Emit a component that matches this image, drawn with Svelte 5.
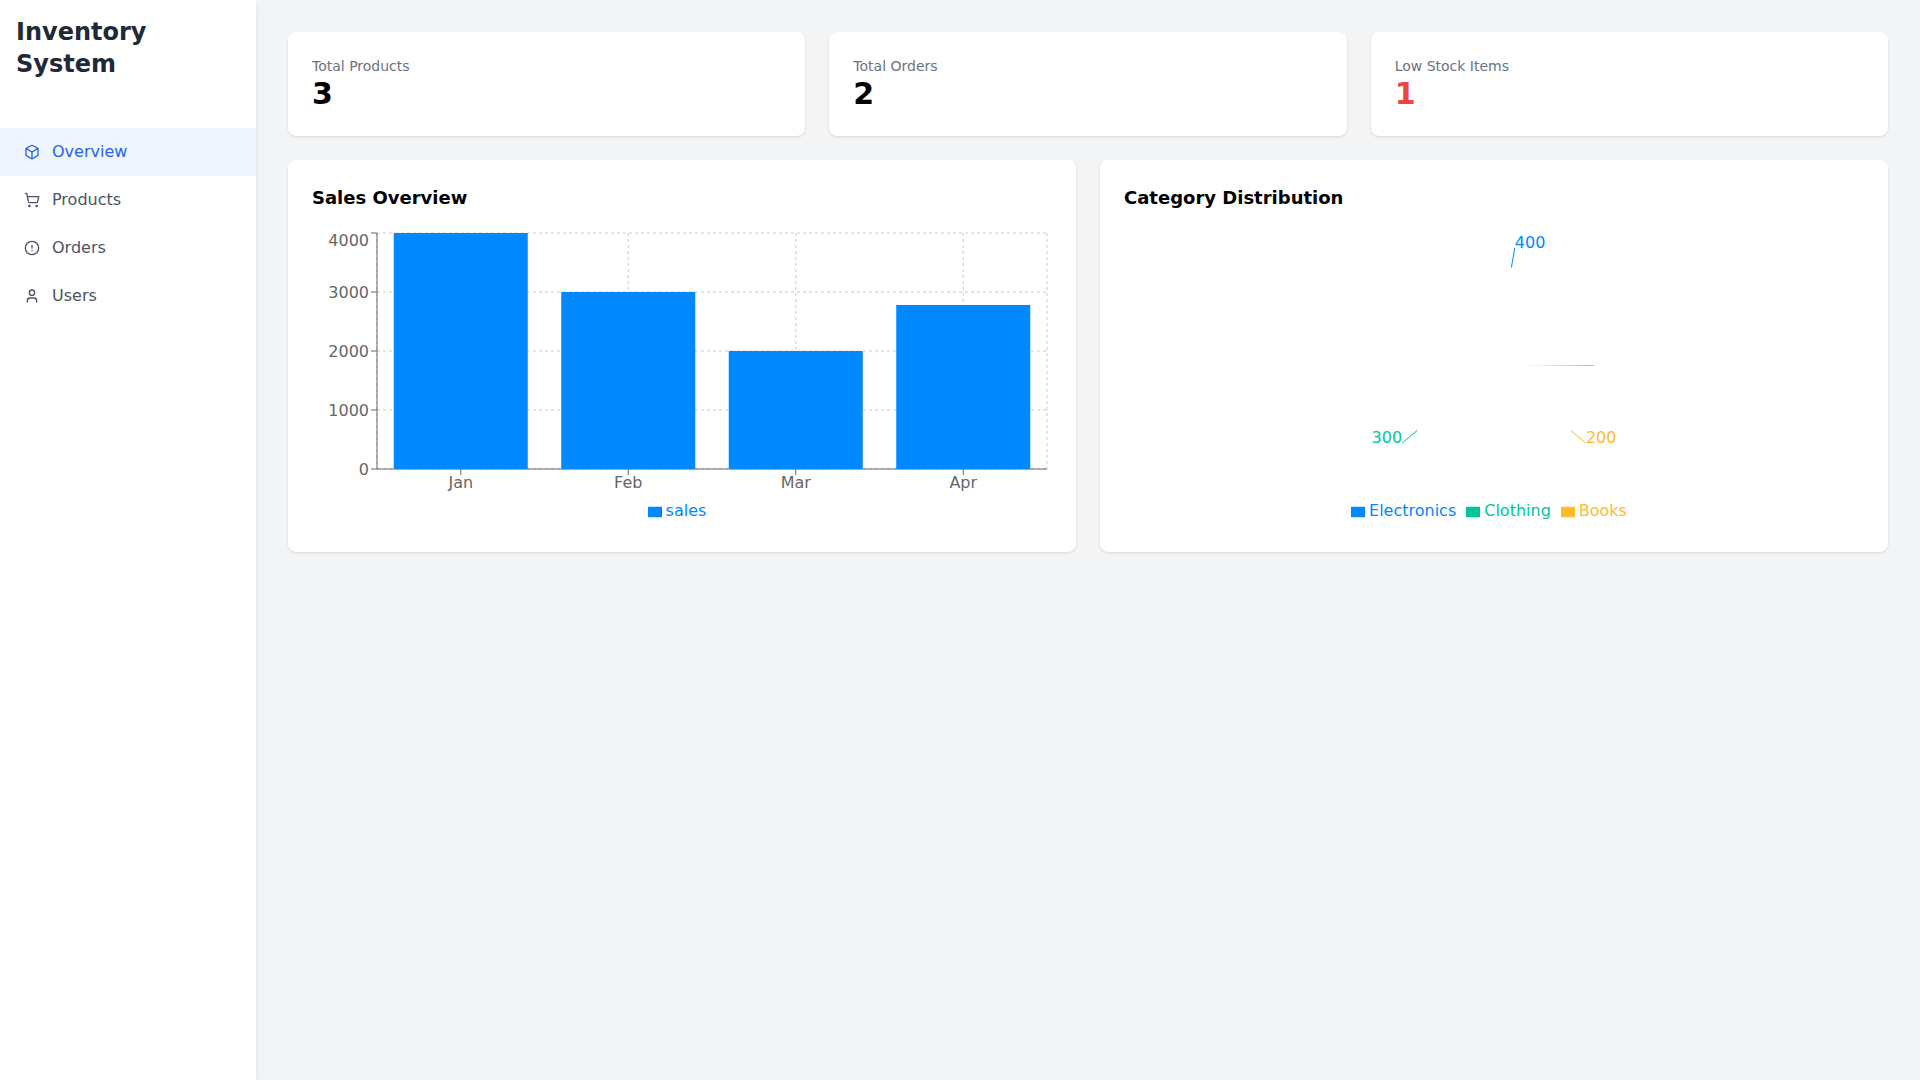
<script>
  const nav = [
    { label: 'Overview', icon: 'box', active: true },
    { label: 'Products', icon: 'cart' },
    { label: 'Orders', icon: 'alert' },
    { label: 'Users', icon: 'user' }
  ];
  const stats = [
    { label: 'Total Products', value: '3' },
    { label: 'Total Orders', value: '2' },
    { label: 'Low Stock Items', value: '1', low: true }
  ];
  const left = 65, right = 735, top = 5, bottom = 241;
  const sy = (v) => bottom - (v / 4000) * (bottom - top);
  const yTicks = [0, 1000, 2000, 3000, 4000];
  const band = (right - left) / 4;
  const bars = [
    { m: 'Jan', v: 4000 },
    { m: 'Feb', v: 3000 },
    { m: 'Mar', v: 2000 },
    { m: 'Apr', v: 2780 }
  ].map((b, i) => ({ ...b, cx: left + band * (i + 0.5) }));
  const barW = band * 0.8;

  const cx = 370, cy = 138;
  const pol = (r, a) => [cx + r * Math.cos((a * Math.PI) / 180), cy - r * Math.sin((a * Math.PI) / 180)];
  const slices = [
    { v: 400, mid: 80, color: '#0088FE', name: 'Electronics' },
    { v: 300, mid: 220, color: '#00C49F', name: 'Clothing' },
    { v: 200, mid: 320, color: '#FFBB28', name: 'Books' }
  ].map((s) => ({ ...s, a: pol(100, s.mid), b: pol(120, s.mid) }));
</script>

<div class="layout">
  <aside class="sidebar">
    <h1>Inventory System</h1>
    <nav>
      {#each nav as item}
        <div class="link" class:active={item.active}>
          <svg class="icon" viewBox="0 0 24 24" fill="none" stroke="currentColor" stroke-width="2" stroke-linecap="round" stroke-linejoin="round">
            {#if item.icon === 'box'}
              <path d="M21 16V8a2 2 0 0 0-1-1.73l-7-4a2 2 0 0 0-2 0l-7 4A2 2 0 0 0 3 8v8a2 2 0 0 0 1 1.73l7 4a2 2 0 0 0 2 0l7-4A2 2 0 0 0 21 16z" />
              <polyline points="3.27 6.96 12 12.01 20.73 6.96" />
              <line x1="12" y1="22.08" x2="12" y2="12" />
            {:else if item.icon === 'cart'}
              <circle cx="8" cy="21" r="1" />
              <circle cx="19" cy="21" r="1" />
              <path d="M2.05 2.05h2l2.66 12.42a2 2 0 0 0 2 1.58h9.78a2 2 0 0 0 1.95-1.57l1.65-7.43H5.12" />
            {:else if item.icon === 'alert'}
              <circle cx="12" cy="12" r="10" />
              <line x1="12" x2="12" y1="8" y2="12" />
              <line x1="12" x2="12.01" y1="16" y2="16" />
            {:else}
              <path d="M19 21v-2a4 4 0 0 0-4-4H9a4 4 0 0 0-4 4v2" />
              <circle cx="12" cy="7" r="4" />
            {/if}
          </svg>
          <span>{item.label}</span>
        </div>
      {/each}
    </nav>
  </aside>

  <main>
    <section class="stats">
      {#each stats as s}
        <div class="card">
          <div class="label">{s.label}</div>
          <div class="value" class:low={s.low}>{s.value}</div>
        </div>
      {/each}
    </section>

    <section class="charts">
      <div class="card">
        <h2>Sales Overview</h2>
        <div class="chart">
          <svg width="740" height="271" viewBox="0 0 740 271">
            {#each yTicks as t}
              <line class="grid" x1={left} x2={right} y1={sy(t)} y2={sy(t)} />
            {/each}
            {#each bars as b}
              <line class="grid" x1={b.cx} x2={b.cx} y1={top} y2={bottom} />
            {/each}
            <line class="grid" x1={left} x2={left} y1={top} y2={bottom} />
            <line class="grid" x1={right} x2={right} y1={top} y2={bottom} />

            <line class="axis" x1={left} x2={right} y1={bottom} y2={bottom} />
            {#each bars as b}
              <line class="axis" x1={b.cx} x2={b.cx} y1={bottom} y2={bottom + 6} />
              <text class="tick" x={b.cx} y={bottom + 8} dy="0.71em" text-anchor="middle">{b.m}</text>
            {/each}

            <line class="axis" x1={left} x2={left} y1={top} y2={bottom} />
            {#each yTicks as t}
              <line class="axis" x1={left - 6} x2={left} y1={sy(t)} y2={sy(t)} />
              <text class="tick" x={left - 8} y={t === 4000 ? sy(t) + 7 : sy(t)} dy="0.355em" text-anchor="end">{t}</text>
            {/each}

            {#each bars as b}
              <rect x={b.cx - barW / 2} y={sy(b.v)} width={barW} height={bottom - sy(b.v)} fill="#0088FE" />
            {/each}
          </svg>
          <ul class="legend">
            <li style="color:#0088FE">
              <svg class="swatch" viewBox="0 0 32 32"><path fill="#0088FE" d="M0 4h32v24H0z" /></svg><span>sales</span>
            </li>
          </ul>
        </div>
      </div>

      <div class="card">
        <h2>Category Distribution</h2>
        <div class="chart">
          <svg width="740" height="271" viewBox="0 0 740 271">
            <path d="M401 137 L468 136.88 L468 137 Z" fill="#FFBB28" />
            <path d="M401 138 L470 137.55 L470 138 Z" fill="#0088FE" />
            {#each slices as s}
              <line x1={s.a[0]} y1={s.a[1]} x2={s.b[0]} y2={s.b[1]} stroke={s.color} />
              <text x={s.b[0]} y={s.b[1]} fill={s.color} font-size="16" text-anchor={s.b[0] > cx ? 'start' : 'end'}>{s.v}</text>
            {/each}
          </svg>
          <ul class="legend">
            {#each slices as s}
              <li style="color:{s.color}">
                <svg class="swatch" viewBox="0 0 32 32"><path fill={s.color} d="M0 4h32v24H0z" /></svg><span>{s.name}</span>
              </li>
            {/each}
          </ul>
        </div>
      </div>
    </section>
  </main>
</div>

<style>
  :global(body) {
    margin: 0;
    font-family: "DejaVu Sans", sans-serif;
    background: #f3f4f6;
  }
  .layout {
    display: flex;
    min-height: 1080px;
    background: #f3f4f6;
  }
  .sidebar {
    width: 256px;
    flex: none;
    background: #fff;
    box-shadow: 0 4px 6px -1px rgba(0,0,0,.1), 0 2px 4px -2px rgba(0,0,0,.1);
  }
  h1 {
    margin: 0;
    padding: 16px;
    font-size: 24px;
    line-height: 32px;
    font-weight: 700;
    color: #1f2937;
  }
  nav { margin-top: 32px; }
  .link {
    display: flex;
    align-items: center;
    padding: 12px 24px;
    font-size: 16px;
    line-height: 24px;
    color: #4b5563;
  }
  .link.active { background: #eff6ff; color: #2563eb; }
  .icon { width: 16px; height: 16px; margin-right: 12px; flex: none; }
  main {
    flex: 1;
    min-width: 0;
    padding: 32px;
    display: flex;
    flex-direction: column;
    gap: 24px;
  }
  .stats { display: grid; grid-template-columns: repeat(3, 1fr); gap: 24px; }
  .charts { display: grid; grid-template-columns: repeat(2, 1fr); gap: 24px; }
  .card {
    background: #fff;
    border-radius: 8px;
    padding: 24px;
    box-shadow: 0 1px 3px 0 rgba(0,0,0,.1), 0 1px 2px -1px rgba(0,0,0,.1);
  }
  .label { font-size: 14px; line-height: 20px; color: #6b7280; }
  .value { font-size: 30px; line-height: 36px; font-weight: 700; color: #000; }
  .value.low { color: #ef4444; }
  h2 {
    margin: 0 0 16px;
    font-size: 18px;
    line-height: 28px;
    font-weight: 700;
    color: #000;
  }
  .chart { height: 300px; }
  .chart > svg { display: block; }
  .grid { stroke: #ccc; stroke-dasharray: 3 3; fill: none; }
  .axis { stroke: #666; fill: none; }
  .tick { fill: #666; font-size: 16px; }
  .legend {
    margin: 0;
    padding: 0;
    list-style: none;
    text-align: center;
    font-size: 16px;
    line-height: 24px;
  }
  .legend li { display: inline-block; margin-right: 10px; }
  .swatch {
    display: inline-block;
    width: 14px;
    height: 14px;
    vertical-align: middle;
    margin-right: 4px;
  }
</style>
